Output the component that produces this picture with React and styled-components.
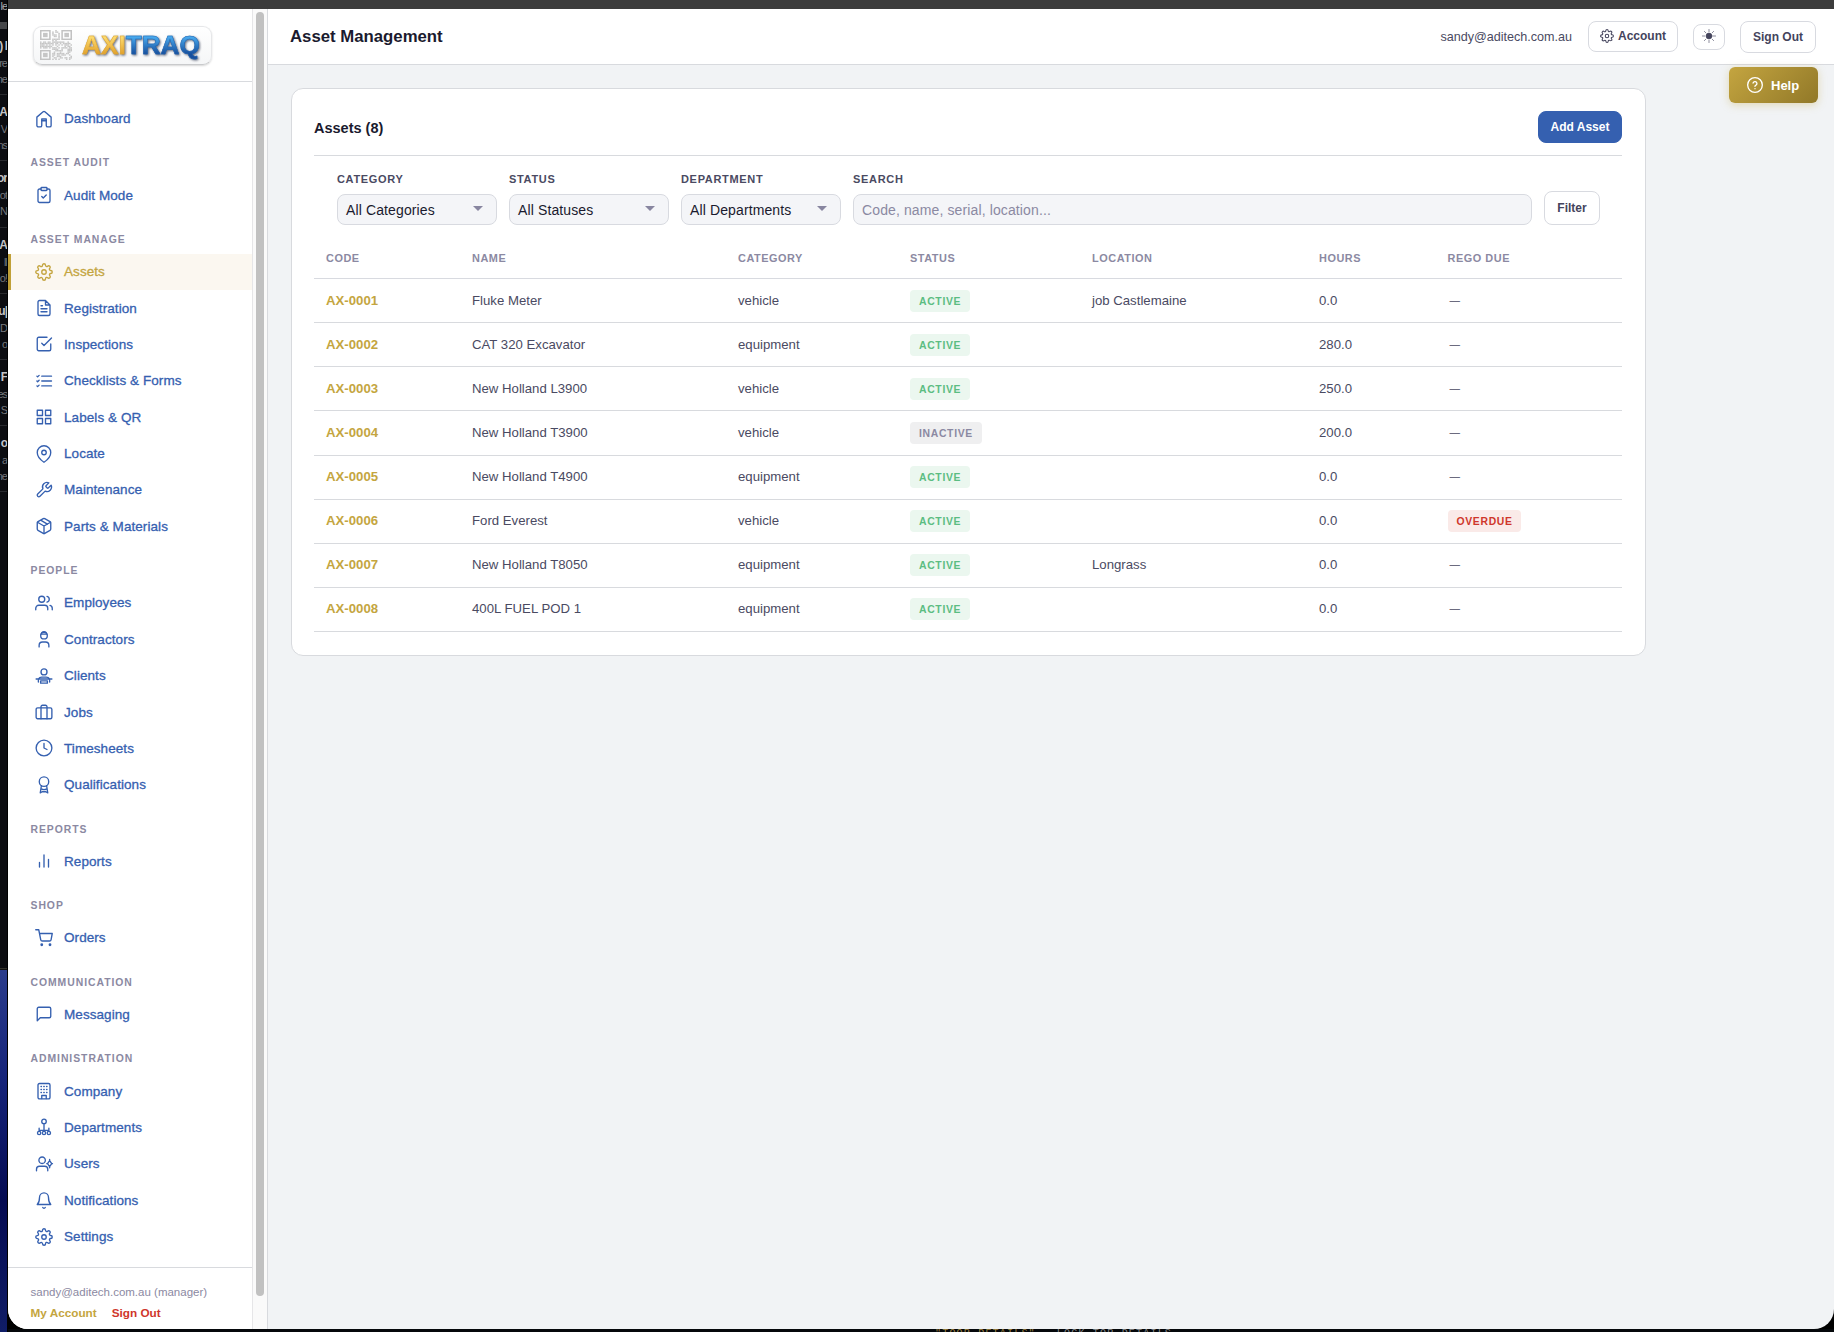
import React from "react";
import styled, { createGlobalStyle, css } from "styled-components";

const GlobalStyle = createGlobalStyle`
  * { box-sizing: border-box; }
  body {
    margin: 0;
    background: #000;
    font-family: "Liberation Sans", Arial, sans-serif;
    overflow: hidden;
  }
  button, input { font-family: inherit; }
`;

// ********** Icons ***********
const gear = (
  <>
    <circle cx="12" cy="12" r="3" />
    <path d="M19.4 15a1.65 1.65 0 0 0 .33 1.82l.06.06a2 2 0 1 1-2.83 2.83l-.06-.06a1.65 1.65 0 0 0-1.82-.33 1.65 1.65 0 0 0-1 1.51V21a2 2 0 0 1-4 0v-.09A1.65 1.65 0 0 0 9 19.4a1.65 1.65 0 0 0-1.82.33l-.06.06a2 2 0 1 1-2.83-2.83l.06-.06a1.65 1.65 0 0 0 .33-1.82 1.65 1.65 0 0 0-1.51-1H3a2 2 0 0 1 0-4h.09A1.65 1.65 0 0 0 4.6 9a1.65 1.65 0 0 0-.33-1.82l-.06-.06a2 2 0 1 1 2.83-2.83l.06.06a1.65 1.65 0 0 0 1.82.33H9a1.65 1.65 0 0 0 1-1.51V3a2 2 0 0 1 4 0v.09a1.65 1.65 0 0 0 1 1.51 1.65 1.65 0 0 0 1.82-.33l.06-.06a2 2 0 1 1 2.83 2.83l-.06.06a1.65 1.65 0 0 0-.33 1.82V9a1.65 1.65 0 0 0 1.51 1H21a2 2 0 0 1 0 4h-.09a1.65 1.65 0 0 0-1.51 1z" />
  </>
);

const icons = {
  gear,
  home: (
    <>
      <path d="M2.5 9.5 10.8 2.4a2 2 0 0 1 2.4 0l8.3 7.1v11a2 2 0 0 1-2 2H17a2 2 0 0 1-2-2V12H9v8.5a2 2 0 0 1-2 2H4.5a2 2 0 0 1-2-2z" />
      <path d="M9 14.3h6" />
    </>
  ),
  clipboard: (
    <>
      <path d="M16 4h2a2 2 0 0 1 2 2v14a2 2 0 0 1-2 2H6a2 2 0 0 1-2-2V6a2 2 0 0 1 2-2h2" />
      <rect x="8" y="2" width="8" height="4" rx="1" />
      <path d="m9 14 2 2 4-4" />
    </>
  ),
  file: (
    <path d="M14 2H6a2 2 0 0 0-2 2v16a2 2 0 0 0 2 2h12a2 2 0 0 0 2-2V8zM14 2v6h6M16 13H8M16 17H8M10 9H8" />
  ),
  check: (
    <path d="m9 11 3 3L22 4M21 12v7a2 2 0 0 1-2 2H5a2 2 0 0 1-2-2V5a2 2 0 0 1 2-2h11" />
  ),
  list: (
    <path d="M9 5.5h13M9 12h13M9 18.5h13M2.5 5.5l1 1 2-2M2.5 12l1 1 2-2M2.5 18.5l1 1 2-2" />
  ),
  grid: (
    <>
      <rect x="3" y="3" width="7" height="7" />
      <rect x="14" y="3" width="7" height="7" />
      <rect x="3" y="14" width="7" height="7" />
      <rect x="14" y="14" width="7" height="7" />
    </>
  ),
  pin: (
    <>
      <path d="M21 10c0 7-9 13-9 13s-9-6-9-13a9 9 0 0 1 18 0z" />
      <circle cx="12" cy="10" r="3" />
    </>
  ),
  wrench: (
    <path d="M14.7 6.3a1 1 0 0 0 0 1.4l1.6 1.6a1 1 0 0 0 1.4 0l3.77-3.77a6 6 0 0 1-7.94 7.94l-6.91 6.91a2.12 2.12 0 0 1-3-3l6.91-6.91a6 6 0 0 1 7.94-7.94l-3.76 3.76z" />
  ),
  box: (
    <>
      <path d="m16.5 9.4-9-5.19M21 16V8a2 2 0 0 0-1-1.73l-7-4a2 2 0 0 0-2 0l-7 4A2 2 0 0 0 3 8v8a2 2 0 0 0 1 1.73l7 4a2 2 0 0 0 2 0l7-4A2 2 0 0 0 21 16z" />
      <path d="M3.27 6.96 12 12.01l8.73-5.05M12 22.08V12" />
    </>
  ),
  users: (
    <>
      <path d="M17 21v-2a4 4 0 0 0-4-4H5a4 4 0 0 0-4 4v2M23 21v-2a4 4 0 0 0-3-3.87M16 3.13a4 4 0 0 1 0 7.75" />
      <circle cx="9" cy="7" r="4" />
    </>
  ),
  contractor: (
    <>
      <circle cx="12" cy="7.5" r="4.4" />
      <path d="M8 5.5h8M9 3.5a4 4 0 0 1 6 0M5.5 22.5V20.500A4.500 4.500 0 0 1 10 16h4a4.500 4.500 0 0 1 4.500 4.500v2" />
    </>
  ),
  client: (
    <>
      <circle cx="12" cy="6.5" r="4" />
      <path d="M1.5 16h21M4.5 17.500V20M19.500 17.500V20M7.500 18.500h9V21.500h-9zM5 15.500a5 3 0 0 1 4-2h6a5 3 0 0 1 4 2" />
    </>
  ),
  briefcase: (
    <>
      <rect x="1.5" y="6.5" width="21" height="14.5" rx="2" />
      <path d="M16 21V5a2 2 0 0 0-2-2h-4a2 2 0 0 0-2 2v16" />
    </>
  ),
  clock: (
    <>
      <circle cx="12" cy="12" r="10.5" />
      <path d="M12 6v6l4 2" />
    </>
  ),
  award: (
    <>
      <circle cx="12" cy="7.5" r="6.3" />
      <path d="M8.5 13 7 22.500l2.500-1.500 2.500 0 2.500 0 2.500 1.500L15.500 13M9 17.500c2 1 4 1 6 0" />
    </>
  ),
  bars: <path d="M18 20V10M12 20V4M6 20v-6" />,
  cart: (
    <>
      <circle cx="9" cy="21" r="1" />
      <circle cx="20" cy="21" r="1" />
      <path d="M1 1h4l2.68 13.39a2 2 0 0 0 2 1.61h9.72a2 2 0 0 0 2-1.61L23 6H6" />
    </>
  ),
  message: (
    <path d="M21 15a2 2 0 0 1-2 2H7l-4 4V5a2 2 0 0 1 2-2h14a2 2 0 0 1 2 2z" />
  ),
  building: (
    <>
      <rect x="4" y="2" width="16" height="20.5" rx="2" />
      <path d="M9 22v-4h6v4M8 6h.6M8 10h.6M8 14h.6M11.7 6h.6M11.7 10h.6M11.7 14h.6M15.4 6h.6M15.4 10h.6M15.4 14h.6" />
    </>
  ),
  org: (
    <>
      <circle cx="12" cy="4.5" r="3" />
      <circle cx="5.5" cy="20" r="2.2" />
      <circle cx="12" cy="20" r="2.2" />
      <circle cx="18.5" cy="20" r="2.2" />
      <path d="M12 7.5v10M5.5 17.5v-4M18.5 17.5v-4M5.5 16.500h13" />
    </>
  ),
  userCog: (
    <>
      <circle cx="9.5" cy="7" r="4.3" />
      <path d="M2 21v-2a4 4 0 0 1 4-4h7a4 4 0 0 1 4 4v2" />
      <path d="M19.5 7.500 22.300 11.500l-2.800 4-2.800-4zM19.500 6v1.500M19.500 15.500V17M23.300 11.500h-1M16.700 11.500h-1" />
    </>
  ),
  bell: (
    <path d="M18 8.5a6 6 0 0 0-12 0c0 6.5-3 9.5-3 9.5h18s-3-3-3-9.5M13.73 22a2 2 0 0 1-3.46 0" />
  ),
  help: (
    <>
      <circle cx="12" cy="12" r="11" />
      <path d="M9.09 9a3 3 0 0 1 5.83 1c0 2-3 2.5-3 4M12 17.5h.01" />
    </>
  ),
};

const Svg = styled.svg`
  width: ${(p) => p.$size || 18}px;
  height: ${(p) => p.$size || 18}px;
  flex: none;
  overflow: visible;
  fill: none;
  stroke: currentColor;
  stroke-width: ${(p) => p.$stroke || 1.8};
  stroke-linecap: round;
  stroke-linejoin: round;
`;

const Icon = ({ name, size, stroke }) => (
  <Svg viewBox="0 0 24 24" $size={size} $stroke={stroke}>
    {icons[name]}
  </Svg>
);

const Sun = () => (
  <Svg viewBox="0 0 16 16" $size={14} $stroke={0.7}>
    <circle cx="8" cy="8" r="3.4" fill="currentColor" />
    <path d="M8 .5v2.500M8 13v2.500M.5 8h2.500M13 8h2.500M2.7 2.7l1.600 1.600M11.700 11.700l1.600 1.600M2.7 13.300l1.600-1.600M11.700 4.300l1.600-1.600" />
  </Svg>
);

// QR badge drawn next to the wordmark
const QrCode = () => {
  const n = 21;
  const cells = [];
  const inFinder = (x, y) =>
    (x < 8 && y < 8) || (x > 12 && y < 8) || (x < 8 && y > 12);
  for (let y = 0; y < n; y++) {
    for (let x = 0; x < n; x++) {
      if (!inFinder(x, y) && (x * 7 + y * 13 + ((x * y * 5) % 11) + ((x ^ y) % 3)) % 5 < 3) {
        cells.push(<rect key={`${x}-${y}`} x={x} y={y} width="1" height="1" />);
      }
    }
  }
  return (
    <svg width="32" height="30" viewBox="0 0 21 21" preserveAspectRatio="none" fill="#c6c6c6">
      {cells}
      {[[0, 0], [14, 0], [0, 14]].map(([x, y]) => (
        <g key={`${x}${y}`}>
          <rect x={x + 0.5} y={y + 0.5} width="6" height="6" fill="none" stroke="#c2c2c2" />
          <rect x={x + 2} y={y + 2} width="3" height="3" />
        </g>
      ))}
    </svg>
  );
};

// ********** Data ***********
const nav = [
  { items: [["home", "Dashboard"]] },
  { title: "Asset Audit", items: [["clipboard", "Audit Mode"]] },
  {
    title: "Asset Manage",
    items: [
      ["gear", "Assets"],
      ["file", "Registration"],
      ["check", "Inspections"],
      ["list", "Checklists & Forms"],
      ["grid", "Labels & QR"],
      ["pin", "Locate"],
      ["wrench", "Maintenance"],
      ["box", "Parts & Materials"],
    ],
  },
  {
    title: "People",
    items: [
      ["users", "Employees"],
      ["contractor", "Contractors"],
      ["client", "Clients"],
      ["briefcase", "Jobs"],
      ["clock", "Timesheets"],
      ["award", "Qualifications"],
    ],
  },
  { title: "Reports", items: [["bars", "Reports"]] },
  { title: "Shop", items: [["cart", "Orders"]] },
  { title: "Communication", items: [["message", "Messaging"]] },
  {
    title: "Administration",
    items: [
      ["building", "Company"],
      ["org", "Departments"],
      ["userCog", "Users"],
      ["bell", "Notifications"],
      ["gear", "Settings"],
    ],
  },
];

const columns = [
  ["Code", 146],
  ["Name", 266],
  ["Category", 172],
  ["Status", 182],
  ["Location", 227],
  ["Hours", 128.5],
  ["Rego Due", 186.5],
];

const assets = [
  ["AX-0001", "Fluke Meter", "vehicle", "active", "job Castlemaine", "0.0"],
  ["AX-0002", "CAT 320 Excavator", "equipment", "active", "", "280.0"],
  ["AX-0003", "New Holland L3900", "vehicle", "active", "", "250.0"],
  ["AX-0004", "New Holland T3900", "vehicle", "inactive", "", "200.0"],
  ["AX-0005", "New Holland T4900", "equipment", "active", "", "0.0"],
  ["AX-0006", "Ford Everest", "vehicle", "active", "", "0.0", "overdue"],
  ["AX-0007", "New Holland T8050", "equipment", "active", "Longrass", "0.0"],
  ["AX-0008", "400L FUEL POD 1", "equipment", "active", "", "0.0"],
];

// line ends of the window that sits behind this one
const behind = [
  [") I", "'re", "ne"],
  ["A", "V", "ns"],
  ["or", "ot", "N"],
  ["A", "ll", "o!"],
  ["u|", "D", "o"],
  ["F", "es", "S"],
  ["o", "a", "ne"],
];

// ********** Desktop and window ***********
const Desktop = styled.div`
  display: grid;
  grid-template-columns: 8px 1fr;
  width: 1834px;
  height: 1332px;
  overflow: hidden;
  background: #000;
`;

const BackWindow = styled.div`
  display: flex;
  flex-direction: column;
  overflow: hidden;
  border-right: 1px solid #000;
  background: linear-gradient(#0c0d11 0 968px, #35342c 968px 969px, #111 969px 970px, #2b3c8c 970px, #16247a 1080px, #050b52 1200px, #101d66 1332px);
`;

const BackTop = styled.div`
  height: 29px;
  flex: none;
  border-bottom: 7px solid #46474a;
  display: flex;
  justify-content: flex-end;
  color: #aaa;
  font-size: 11px;
  line-height: 13px;
  letter-spacing: -1px;
`;

const BackItem = styled.div`
  height: 66.2px;
  flex: none;
  display: flex;
  flex-direction: column;
  align-items: flex-end;
  padding-top: 8px;
  border-bottom: 1px solid #292a2e;
  color: #77787d;
  font-size: 11px;
  line-height: 16px;
  letter-spacing: -1px;
  white-space: nowrap;

  b {
    color: #c4c4c6;
    font-size: 12px;
    line-height: 18px;
  }
`;

const Front = styled.div`
  display: flex;
  flex-direction: column;
  min-width: 0;
`;

const TitleStrip = styled.div`
  height: 9px;
  flex: none;
  background: #3c3c3c;
`;

const Window = styled.div`
  height: 1320px;
  flex: none;
  display: flex;
  overflow: hidden;
  background: #f1f3f5;
  border-radius: 0 0 20px 20px;
`;

const DeskBottom = styled.div`
  height: 3px;
  display: flex;
  gap: 21px;
  padding-left: 927px;
  overflow: hidden;
  background: #05080b;
  color: #87898a;
  font: 10px/10px "Liberation Mono", monospace;
  letter-spacing: 1.2px;
  white-space: pre;
`;

const Amber = styled.span`
  color: #a08440;
`;

// ********** Sidebar ***********
const Sidebar = styled.aside`
  width: 244px;
  flex: none;
  display: flex;
  flex-direction: column;
  background: #fff;
`;

const Brand = styled.div`
  height: 73px;
  flex: none;
  padding: 17px 0 0 25px;
  border-bottom: 1px solid #d8dade;
`;

const LogoCard = styled.div`
  width: 179px;
  height: 39px;
  display: flex;
  align-items: center;
  gap: 10px;
  padding: 0 0 2px 6px;
  border: 1px solid #e6e7e9;
  border-bottom-color: #c9cacc;
  border-radius: 9px;
  background: linear-gradient(#fff, #f5f6f7);
  box-shadow: 0 1px 2px rgba(0, 0, 0, 0.16);
`;

const Wordmark = styled.div`
  display: flex;
  font-size: 26.2px;
  line-height: 30px;
  font-weight: 700;
  filter: drop-shadow(1px 1px 1px rgba(20, 30, 60, 0.65));
`;

const WordPart = styled.span`
  color: transparent;
  background: ${(p) => p.$fill};
  background-clip: text;
  -webkit-background-clip: text;
  -webkit-text-stroke: 0.5px ${(p) => p.$edge};
`;

const Nav = styled.nav`
  flex: none;
  height: 1185px;
  padding-top: 18.4px;
`;

const NavTitle = styled.div`
  height: 40.2px;
  padding: 18.7px 0 0 22.5px;
  color: #8b89a2;
  font-size: 10.4px;
  line-height: 16px;
  font-weight: 700;
  letter-spacing: 0.96px;
  text-transform: uppercase;
`;

const NavItem = styled.a`
  height: 36.38px;
  display: flex;
  align-items: center;
  gap: 11px;
  padding-left: 27px;
  color: #3560b0;
  font-size: 13.5px;
  letter-spacing: 0.07px;
  -webkit-text-stroke: 0.3px currentColor;

  ${(p) =>
    p.$active &&
    css`
      padding-left: 24px;
      border-left: 3px solid #c0a038;
      color: #c4a540;
      background: #fbf7f0;
    `}
`;

const UserBox = styled.div`
  flex: 1;
  padding: 15px 0 0 22.5px;
  border-top: 1px solid #d8dade;
  color: #8b89a2;
  font-size: 11.5px;
  line-height: 18px;
`;

const UserLinks = styled.div`
  display: flex;
  gap: 15px;
  padding-top: 3px;
  font-size: 11.75px;
  font-weight: 700;
`;

const UserLink = styled.a`
  color: ${(p) => (p.$danger ? "#cf362b" : "#c4a540")};
`;

const ScrollTrack = styled.div`
  width: 16px;
  flex: none;
  padding: 3px 0 0 3px;
  background: #fafafa;
  border-left: 1px solid #e6e6e8;
  border-right: 1px solid #d8dade;
`;

const ScrollThumb = styled.div`
  width: 8px;
  height: 1284px;
  border-radius: 4px;
  background: #c1c1c1;
`;

// ********** Main area ***********
const Main = styled.main`
  flex: 1;
  min-width: 0;
  position: relative;
`;

const TopBar = styled.header`
  height: 56px;
  display: flex;
  align-items: center;
  padding: 0 18px 0 22px;
  background: #fff;
  border-bottom: 1px solid #d8dade;
`;

const PageTitle = styled.h1`
  flex: 1;
  margin: 0;
  color: #1a1a2e;
  font-size: 16.75px;
  font-weight: 700;
`;

const Email = styled.span`
  margin-right: 16px;
  color: #4a4a62;
  font-size: 12.6px;
  letter-spacing: -0.02px;
`;

const Button = styled.button`
  width: ${(p) => p.$w}px;
  height: ${(p) => p.$h}px;
  display: flex;
  align-items: center;
  justify-content: center;
  gap: 4px;
  flex: none;
  padding: 0 0 ${(p) => p.$lift || 0}px;
  border: 1px solid ${(p) => (p.$primary ? "#3560b0" : "#d8dae0")};
  border-radius: 8px;
  background: ${(p) => (p.$primary ? "#3560b0" : "#fff")};
  color: ${(p) => (p.$primary ? "#fff" : "#44445c")};
  font-size: 12px;
  font-weight: 700;
`;

const TopActions = styled.div`
  display: flex;
  align-items: center;
  gap: 15px;
`;

const HelpButton = styled.button`
  position: absolute;
  top: 58px;
  right: 16px;
  width: 89px;
  height: 36px;
  display: flex;
  align-items: center;
  gap: 8px;
  padding: 0 0 0 18px;
  border: 0;
  border-radius: 6px;
  background: linear-gradient(135deg, #c4a540, #917828);
  box-shadow: 0 2px 8px rgba(196, 165, 64, 0.35);
  color: #fff;
  font-size: 13px;
  font-weight: 700;
`;

const Card = styled.section`
  width: 1355px;
  height: 568px;
  margin: 23px 0 0 23px;
  padding: 22px 23px 0 22px;
  border: 1px solid #d8dade;
  border-radius: 12px;
  background: #fff;
`;

const CardHead = styled.div`
  height: 45px;
  display: flex;
  align-items: flex-start;
  justify-content: space-between;
  border-bottom: 1px solid #d8dade;
`;

const CardTitle = styled.h2`
  margin: 8px 0 0;
  color: #1a1a2e;
  font-size: 14.5px;
  line-height: 18px;
`;

const Filters = styled.div`
  height: 81px;
  display: flex;
  gap: 12px;
  padding: 15px 22px 0 23px;
`;

const Field = styled.label`
  width: ${(p) => (p.$grow ? "auto" : "160px")};
  flex: ${(p) => (p.$grow ? 1 : "none")};
`;

const FieldLabel = styled.div`
  height: 23px;
  color: #4a4a62;
  font-size: 11px;
  line-height: 17px;
  font-weight: 700;
  letter-spacing: 0.68px;
  text-transform: uppercase;
`;

const control = css`
  width: 100%;
  height: 31px;
  padding: 0 13px 0 8px;
  border: 1px solid #d8dae0;
  border-radius: 8px;
  background: #f4f5f8;
  font-size: 14px;
  letter-spacing: 0.12px;
`;

const Select = styled.div`
  ${control}
  display: flex;
  align-items: center;
  justify-content: space-between;
  color: #1a1a2e;
`;

const Caret = styled.span`
  margin-bottom: 3px;
  border: 5px solid transparent;
  border-top-color: #8886a0;
  border-bottom: 0;
`;

const Search = styled.input`
  ${control}
  display: block;

  &::placeholder {
    color: #8b89a2;
    opacity: 1;
  }
`;

const FilterAction = styled.div`
  padding-top: 20px;
`;

const Table = styled.table`
  width: 1308px;
  table-layout: fixed;
  border-collapse: separate;
  border-spacing: 0;
`;

const Th = styled.th`
  height: 42px;
  padding: 1px 12px 0;
  border-bottom: 1px solid #d8dae0;
  color: #8b89a2;
  font-size: 10.9px;
  font-weight: 700;
  letter-spacing: 0.55px;
  text-align: left;
  text-transform: uppercase;
`;

const Td = styled.td`
  height: 44.125px;
  padding: 0 12px 1px;
  border-bottom: 1px solid #d8dade;
  color: ${(p) => (p.$code ? "#c4a540" : "#4a4a62")};
  font-size: 13.2px;
  font-weight: ${(p) => (p.$code ? 700 : 400)};
`;

const badgeColors = {
  active: ["#5bbd82", "#ebf7ef"],
  inactive: ["#8b89a2", "#efeff0"],
  overdue: ["#cf362b", "#faeae8"],
};

const Badge = styled.span`
  display: block;
  width: fit-content;
  height: 22px;
  margin-top: 1px;
  padding: 1px 8.6px 0 9px;
  border-radius: 4px;
  color: ${(p) => badgeColors[p.$kind][0]};
  background: ${(p) => badgeColors[p.$kind][1]};
  font-size: 10.4px;
  line-height: 21px;
  font-weight: 700;
  letter-spacing: 0.68px;
  text-transform: uppercase;
`;

const Dash = styled.span`
  display: block;
  padding: 0 0 1px 2px;
  font-size: 10.5px;
`;

export default function App() {
  return (
    <Desktop>
      <GlobalStyle />
      <BackWindow>
        <BackTop>le</BackTop>
        {behind.map(([title, a, b], i) => (
          <BackItem key={i}>
            <b>{title}</b>
            <span>{a}</span>
            <span>{b}</span>
          </BackItem>
        ))}
      </BackWindow>
      <Front>
        <TitleStrip />
        <Window>
          <Sidebar>
            <Brand>
              <LogoCard>
                <QrCode />
                <Wordmark>
                  <WordPart $fill="linear-gradient(#ffdf73 20%, #e2a22c 80%)" $edge="#dba53a">AXI</WordPart>
                  <WordPart $fill="linear-gradient(#4aaef2 20%, #174f9d 80%)" $edge="#2465b0">TRAQ</WordPart>
                </Wordmark>
              </LogoCard>
            </Brand>
            <Nav>
              {nav.map((group, i) => (
                <div key={i}>
                  {group.title && <NavTitle>{group.title}</NavTitle>}
                  {group.items.map(([icon, label]) => (
                    <NavItem key={label} $active={label === "Assets"}>
                      <Icon name={icon} />
                      {label}
                    </NavItem>
                  ))}
                </div>
              ))}
            </Nav>
            <UserBox>
              sandy@aditech.com.au (manager)
              <UserLinks>
                <UserLink>My Account</UserLink>
                <UserLink $danger>Sign Out</UserLink>
              </UserLinks>
            </UserBox>
          </Sidebar>
          <ScrollTrack>
            <ScrollThumb />
          </ScrollTrack>

          <Main>
            <TopBar>
              <PageTitle>Asset Management</PageTitle>
              <Email>sandy@aditech.com.au</Email>
              <TopActions>
                <Button $w={90} $h={31} $lift={1}>
                  <Icon name="gear" size={14} />
                  Account
                </Button>
                <Button $w={32} $h={26} $lift={2}>
                  <Sun />
                </Button>
                <Button $w={76} $h={32}>Sign Out</Button>
              </TopActions>
            </TopBar>
            <Card>
              <CardHead>
                <CardTitle>Assets (8)</CardTitle>
                <Button $primary $w={84} $h={32}>Add Asset</Button>
              </CardHead>
              <Filters>
                {["Category|All Categories", "Status|All Statuses", "Department|All Departments"].map((f) => {
                  const [label, value] = f.split("|");
                  return (
                    <Field key={label}>
                      <FieldLabel>{label}</FieldLabel>
                      <Select>
                        {value}
                        <Caret />
                      </Select>
                    </Field>
                  );
                })}
                <Field $grow>
                  <FieldLabel>Search</FieldLabel>
                  <Search placeholder="Code, name, serial, location..." />
                </Field>
                <FilterAction>
                  <Button $w={56} $h={34}>Filter</Button>
                </FilterAction>
              </Filters>
              <Table>
                <colgroup>
                  {columns.map(([name, width]) => (
                    <col key={name} width={width} />
                  ))}
                </colgroup>
                <thead>
                  <tr>
                    {columns.map(([name]) => (
                      <Th key={name}>{name}</Th>
                    ))}
                  </tr>
                </thead>
                <tbody>
                  {assets.map(([code, name, category, status, location, hours, rego]) => (
                    <tr key={code}>
                      <Td $code>{code}</Td>
                      <Td>{name}</Td>
                      <Td>{category}</Td>
                      <Td>
                        <Badge $kind={status}>{status}</Badge>
                      </Td>
                      <Td>{location}</Td>
                      <Td>{hours}</Td>
                      <Td>{rego ? <Badge $kind={rego}>{rego}</Badge> : <Dash>—</Dash>}</Td>
                    </tr>
                  ))}
                </tbody>
              </Table>
            </Card>
            <HelpButton>
              <Icon name="help" size={16} stroke={2} />
              Help
            </HelpButton>
          </Main>
        </Window>
        <DeskBottom>
          <Amber>"TOOR DETAILS"</Amber>
          <span>LOCK TOR DETAILS</span>
        </DeskBottom>
      </Front>
    </Desktop>
  );
}
